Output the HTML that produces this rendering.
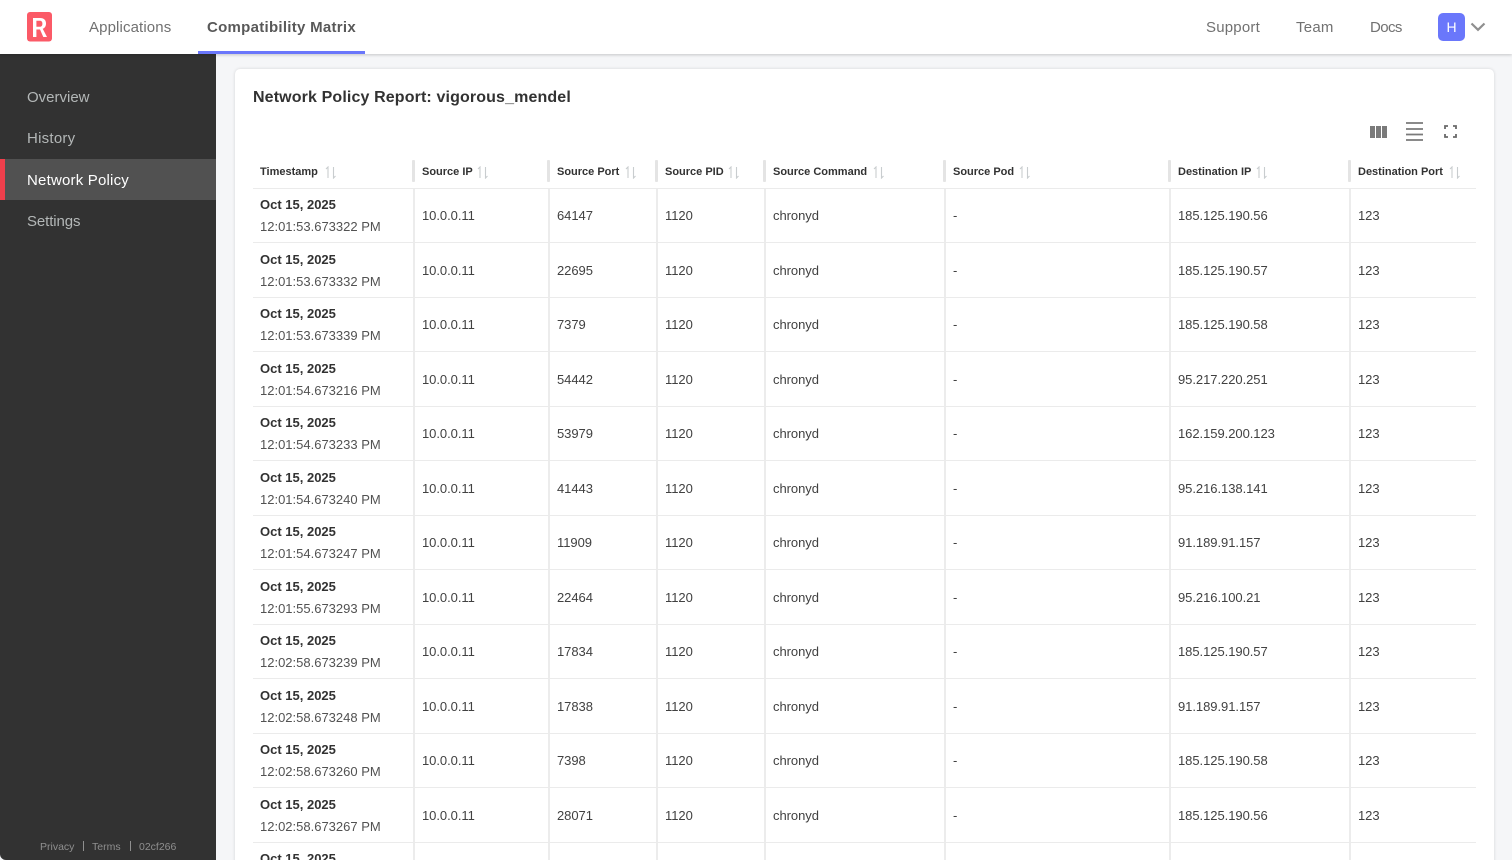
<!DOCTYPE html>
<html><head><meta charset="utf-8"><style>
*{box-sizing:border-box;margin:0;padding:0}
html,body{width:1512px;height:860px;overflow:hidden;background:#f5f6f8;font-family:"Liberation Sans",sans-serif}
#w{position:absolute;left:0;top:0;width:1512px;height:860px;overflow:hidden;background:#f5f6f8}
.nav{position:absolute;left:0;top:0;width:1512px;height:54px;background:#fff;box-shadow:0 1px 3px rgba(0,0,0,.2);z-index:3}
.nt{position:absolute;top:18px;font-size:15px;line-height:20px;color:#717171;white-space:nowrap}
.side{position:absolute;left:0;top:54px;width:216px;height:806px;background:#323232;border-bottom-left-radius:6px;z-index:2}
.si{position:absolute;left:0;width:216px;height:41.5px;line-height:43px;padding-left:27px;font-size:15px;color:#b3b7b7}
.foot{position:absolute;top:840px;font-size:10.5px;line-height:14px;color:#8f8f8f}
.card{position:absolute;left:235px;top:69px;width:1259px;height:800px;background:#fff;border-radius:5px;box-shadow:0 0 3px rgba(0,0,0,.14)}
h1{position:absolute;left:253px;top:87px;font-size:16px;line-height:21px;font-weight:700;color:#323232;letter-spacing:.13px;white-space:nowrap}
.t{position:absolute;white-space:nowrap;color:#323232}
.h{top:164px;margin-top:1px;font-size:11px;line-height:15px;font-weight:700}
.c{margin-top:1px;font-size:13px;line-height:16px;color:#414141;letter-spacing:-.05px}
.d{margin-top:1px;font-size:13px;line-height:16px;font-weight:700;color:#323232}
.m{margin-top:1px;font-size:13px;line-height:16px;color:#525252}
.v{position:absolute;top:189px;width:2px;height:671px;background:#ececec}
.vh{position:absolute;top:160px;width:3px;height:22px;background:#e4e4e4;border-radius:1px}
.r{position:absolute;left:253px;width:1223px;height:1px;background:#ebebeb}
svg{position:absolute;display:block}
</style></head><body><div id="w">
<div class="nav">
<svg style="left:27px;top:12px" width="26" height="30" viewBox="0 0 26 30"><rect width="25" height="29.500" rx="3" fill="#fb5a67"/><path fill-rule="evenodd" d="M6 25V6h7c4 0 6 2 6 5.600 0 2.600-1.200 4.400-3.300 5.200L20 25h-3.700l-3.300-7.500H9.400V25zM9.400 14.700h3.300c1.700 0 2.700-1 2.700-3s-1-2.900-2.700-2.900H9.400z" fill="#fff"/></svg>
<div class="nt" style="left:89px;letter-spacing:.12px">Applications</div>
<div class="nt" style="left:207px;font-weight:700;color:#595959;letter-spacing:.28px">Compatibility Matrix</div>
<div style="position:absolute;left:198px;top:51px;width:167px;height:3px;background:#6a77fb"></div>
<div class="nt" style="left:1206px;letter-spacing:.2px">Support</div>
<div class="nt" style="left:1296px;letter-spacing:.25px">Team</div>
<div class="nt" style="left:1370px;letter-spacing:-.6px">Docs</div>
<div style="position:absolute;left:1438px;top:13px;width:27px;height:28px;border-radius:5px;background:#6a77fb;color:#fff;font-size:14px;line-height:28px;text-align:center">H</div>
<svg style="left:1470px;top:21px" width="16" height="12" viewBox="0 0 16 12"><path d="M1.500 2.500L8 8.800l6.500-6.300" fill="none" stroke="#8f8f8f" stroke-width="2.200"/></svg>
</div>
<div class="side">
<div class="si" style="top:21.500px">Overview</div>
<div class="si" style="top:63px;line-height:44px;letter-spacing:.25px">History</div>
<div class="si" style="top:104.500px;background:#515151;color:#fff;border-left:5px solid #ef3f4c;padding-left:22px;letter-spacing:.2px">Network Policy</div>
<div class="si" style="top:146px;line-height:44px;letter-spacing:-.1px">Settings</div>
</div>
<div class="foot" style="left:40px;z-index:3">Privacy</div>
<div style="position:absolute;left:83px;top:841px;width:1px;height:10px;background:#8f8f8f;z-index:3"></div>
<div class="foot" style="left:92px;z-index:3">Terms</div>
<div style="position:absolute;left:130px;top:841px;width:1px;height:10px;background:#8f8f8f;z-index:3"></div>
<div class="foot" style="left:139px;z-index:3">02cf266</div>
<div class="card"></div>
<h1>Network Policy Report: vigorous_mendel</h1>
<svg style="left:1370px;top:126px" width="17" height="12"><path d="M0 0h5v12H0zM6 0h5v12H6zM12 0h5v12h-5z" fill="#7a7a7a"/></svg>
<svg style="left:1406px;top:122px" width="17" height="19"><path d="M0 1h17M0 7h17M0 12.500h17M0 18h17" stroke="#7a7a7a" stroke-width="1.800"/></svg>
<svg style="left:1444px;top:125px" width="13" height="13"><path d="M1 4V1h3M9 1h3v3M12 9v3H9M4 12H1V9" fill="none" stroke="#6a6a6a" stroke-width="1.800"/></svg>

<div class="t h" style="left:260px">Timestamp</div>
<div class="t h" style="left:422px">Source IP</div>
<div class="t h" style="left:557px">Source Port</div>
<div class="t h" style="left:665px">Source PID</div>
<div class="t h" style="left:773px">Source Command</div>
<div class="t h" style="left:953px">Source Pod</div>
<div class="t h" style="left:1178px">Destination IP</div>
<div class="t h" style="left:1358px">Destination Port</div>
<svg style="left:325px;top:166px" width="12" height="13"><path d="M3 12V1L1 3M8.500 1v11l2-2" fill="none" stroke="#c9cdcf" stroke-width="1.100"/></svg>
<svg style="left:477px;top:166px" width="12" height="13"><path d="M3 12V1L1 3M8.500 1v11l2-2" fill="none" stroke="#c9cdcf" stroke-width="1.100"/></svg>
<svg style="left:625px;top:166px" width="12" height="13"><path d="M3 12V1L1 3M8.500 1v11l2-2" fill="none" stroke="#c9cdcf" stroke-width="1.100"/></svg>
<svg style="left:728px;top:166px" width="12" height="13"><path d="M3 12V1L1 3M8.500 1v11l2-2" fill="none" stroke="#c9cdcf" stroke-width="1.100"/></svg>
<svg style="left:873px;top:166px" width="12" height="13"><path d="M3 12V1L1 3M8.500 1v11l2-2" fill="none" stroke="#c9cdcf" stroke-width="1.100"/></svg>
<svg style="left:1019px;top:166px" width="12" height="13"><path d="M3 12V1L1 3M8.500 1v11l2-2" fill="none" stroke="#c9cdcf" stroke-width="1.100"/></svg>
<svg style="left:1256px;top:166px" width="12" height="13"><path d="M3 12V1L1 3M8.500 1v11l2-2" fill="none" stroke="#c9cdcf" stroke-width="1.100"/></svg>
<svg style="left:1449px;top:166px" width="12" height="13"><path d="M3 12V1L1 3M8.500 1v11l2-2" fill="none" stroke="#c9cdcf" stroke-width="1.100"/></svg>

<div class="vh" style="left:412px"></div><div class="vh" style="left:547px"></div><div class="vh" style="left:655px"></div><div class="vh" style="left:763px"></div><div class="vh" style="left:943px"></div><div class="vh" style="left:1168px"></div><div class="vh" style="left:1348px"></div>
<div class="v" style="left:413px"></div><div class="v" style="left:548px"></div><div class="v" style="left:656px"></div><div class="v" style="left:764px"></div><div class="v" style="left:944px"></div><div class="v" style="left:1169px"></div><div class="v" style="left:1349px"></div>

<div class="r" style="top:188px"></div><div class="r" style="top:242px"></div><div class="r" style="top:297px"></div><div class="r" style="top:351px"></div><div class="r" style="top:406px"></div><div class="r" style="top:460px"></div><div class="r" style="top:515px"></div><div class="r" style="top:569px"></div><div class="r" style="top:624px"></div><div class="r" style="top:678px"></div><div class="r" style="top:733px"></div><div class="r" style="top:787px"></div><div class="r" style="top:842px"></div>

<div class="t d" style="left:260px;top:196px">Oct 15, 2025</div><div class="t m" style="left:260px;top:218px">12:01:53.673322 PM</div><div class="t c" style="left:422px;top:207px">10.0.0.11</div><div class="t c" style="left:557px;top:207px">64147</div><div class="t c" style="left:665px;top:207px">1120</div><div class="t c" style="left:773px;top:207px">chronyd</div><div class="t c" style="left:953px;top:207px">-</div><div class="t c" style="left:1178px;top:207px">185.125.190.56</div><div class="t c" style="left:1358px;top:207px">123</div>
<div class="t d" style="left:260px;top:251px">Oct 15, 2025</div><div class="t m" style="left:260px;top:273px">12:01:53.673332 PM</div><div class="t c" style="left:422px;top:262px">10.0.0.11</div><div class="t c" style="left:557px;top:262px">22695</div><div class="t c" style="left:665px;top:262px">1120</div><div class="t c" style="left:773px;top:262px">chronyd</div><div class="t c" style="left:953px;top:262px">-</div><div class="t c" style="left:1178px;top:262px">185.125.190.57</div><div class="t c" style="left:1358px;top:262px">123</div>
<div class="t d" style="left:260px;top:305px">Oct 15, 2025</div><div class="t m" style="left:260px;top:327px">12:01:53.673339 PM</div><div class="t c" style="left:422px;top:316px">10.0.0.11</div><div class="t c" style="left:557px;top:316px">7379</div><div class="t c" style="left:665px;top:316px">1120</div><div class="t c" style="left:773px;top:316px">chronyd</div><div class="t c" style="left:953px;top:316px">-</div><div class="t c" style="left:1178px;top:316px">185.125.190.58</div><div class="t c" style="left:1358px;top:316px">123</div>
<div class="t d" style="left:260px;top:360px">Oct 15, 2025</div><div class="t m" style="left:260px;top:382px">12:01:54.673216 PM</div><div class="t c" style="left:422px;top:371px">10.0.0.11</div><div class="t c" style="left:557px;top:371px">54442</div><div class="t c" style="left:665px;top:371px">1120</div><div class="t c" style="left:773px;top:371px">chronyd</div><div class="t c" style="left:953px;top:371px">-</div><div class="t c" style="left:1178px;top:371px">95.217.220.251</div><div class="t c" style="left:1358px;top:371px">123</div>
<div class="t d" style="left:260px;top:414px">Oct 15, 2025</div><div class="t m" style="left:260px;top:436px">12:01:54.673233 PM</div><div class="t c" style="left:422px;top:425px">10.0.0.11</div><div class="t c" style="left:557px;top:425px">53979</div><div class="t c" style="left:665px;top:425px">1120</div><div class="t c" style="left:773px;top:425px">chronyd</div><div class="t c" style="left:953px;top:425px">-</div><div class="t c" style="left:1178px;top:425px">162.159.200.123</div><div class="t c" style="left:1358px;top:425px">123</div>
<div class="t d" style="left:260px;top:469px">Oct 15, 2025</div><div class="t m" style="left:260px;top:491px">12:01:54.673240 PM</div><div class="t c" style="left:422px;top:480px">10.0.0.11</div><div class="t c" style="left:557px;top:480px">41443</div><div class="t c" style="left:665px;top:480px">1120</div><div class="t c" style="left:773px;top:480px">chronyd</div><div class="t c" style="left:953px;top:480px">-</div><div class="t c" style="left:1178px;top:480px">95.216.138.141</div><div class="t c" style="left:1358px;top:480px">123</div>
<div class="t d" style="left:260px;top:523px">Oct 15, 2025</div><div class="t m" style="left:260px;top:545px">12:01:54.673247 PM</div><div class="t c" style="left:422px;top:534px">10.0.0.11</div><div class="t c" style="left:557px;top:534px">11909</div><div class="t c" style="left:665px;top:534px">1120</div><div class="t c" style="left:773px;top:534px">chronyd</div><div class="t c" style="left:953px;top:534px">-</div><div class="t c" style="left:1178px;top:534px">91.189.91.157</div><div class="t c" style="left:1358px;top:534px">123</div>
<div class="t d" style="left:260px;top:578px">Oct 15, 2025</div><div class="t m" style="left:260px;top:600px">12:01:55.673293 PM</div><div class="t c" style="left:422px;top:589px">10.0.0.11</div><div class="t c" style="left:557px;top:589px">22464</div><div class="t c" style="left:665px;top:589px">1120</div><div class="t c" style="left:773px;top:589px">chronyd</div><div class="t c" style="left:953px;top:589px">-</div><div class="t c" style="left:1178px;top:589px">95.216.100.21</div><div class="t c" style="left:1358px;top:589px">123</div>
<div class="t d" style="left:260px;top:632px">Oct 15, 2025</div><div class="t m" style="left:260px;top:654px">12:02:58.673239 PM</div><div class="t c" style="left:422px;top:643px">10.0.0.11</div><div class="t c" style="left:557px;top:643px">17834</div><div class="t c" style="left:665px;top:643px">1120</div><div class="t c" style="left:773px;top:643px">chronyd</div><div class="t c" style="left:953px;top:643px">-</div><div class="t c" style="left:1178px;top:643px">185.125.190.57</div><div class="t c" style="left:1358px;top:643px">123</div>
<div class="t d" style="left:260px;top:687px">Oct 15, 2025</div><div class="t m" style="left:260px;top:709px">12:02:58.673248 PM</div><div class="t c" style="left:422px;top:698px">10.0.0.11</div><div class="t c" style="left:557px;top:698px">17838</div><div class="t c" style="left:665px;top:698px">1120</div><div class="t c" style="left:773px;top:698px">chronyd</div><div class="t c" style="left:953px;top:698px">-</div><div class="t c" style="left:1178px;top:698px">91.189.91.157</div><div class="t c" style="left:1358px;top:698px">123</div>
<div class="t d" style="left:260px;top:741px">Oct 15, 2025</div><div class="t m" style="left:260px;top:763px">12:02:58.673260 PM</div><div class="t c" style="left:422px;top:752px">10.0.0.11</div><div class="t c" style="left:557px;top:752px">7398</div><div class="t c" style="left:665px;top:752px">1120</div><div class="t c" style="left:773px;top:752px">chronyd</div><div class="t c" style="left:953px;top:752px">-</div><div class="t c" style="left:1178px;top:752px">185.125.190.58</div><div class="t c" style="left:1358px;top:752px">123</div>
<div class="t d" style="left:260px;top:796px">Oct 15, 2025</div><div class="t m" style="left:260px;top:818px">12:02:58.673267 PM</div><div class="t c" style="left:422px;top:807px">10.0.0.11</div><div class="t c" style="left:557px;top:807px">28071</div><div class="t c" style="left:665px;top:807px">1120</div><div class="t c" style="left:773px;top:807px">chronyd</div><div class="t c" style="left:953px;top:807px">-</div><div class="t c" style="left:1178px;top:807px">185.125.190.56</div><div class="t c" style="left:1358px;top:807px">123</div>
<div class="t d" style="left:260px;top:850px">Oct 15, 2025</div>
</div></body></html>
